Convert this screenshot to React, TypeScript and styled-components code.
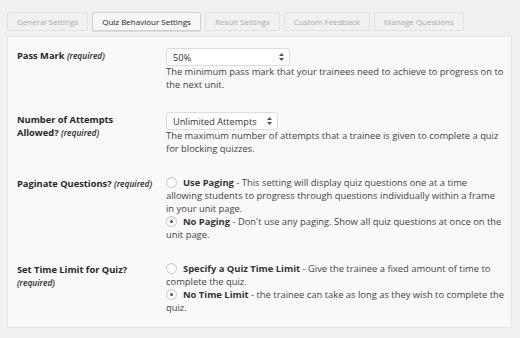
import React from 'react';
import styled, {createGlobalStyle} from 'styled-components';

const GlobalStyle = createGlobalStyle`
  html, body {
    margin: 0;
    padding: 0;
    background: #f1f1f1;
  }
  body {
    font-family: 'Open Sans', 'Noto Sans', sans-serif;
    color: #444;
  }
`;

const tabs = ['General Settings', 'Quiz Behaviour Settings', 'Result Settings', 'Custom Feedback', 'Manage Questions'];

interface SelectProps {
  value: string;
  width: number;
}

const SelectBox = ({value, width}: SelectProps) => (
  <Select style={{width}}>
    <span>{value}</span>
    <svg width="5" height="8" viewBox="0 0 5 8">
      <path d="M2.5 0 L5 3 L0 3 Z M0 5 L5 5 L2.5 8 Z" fill="#555" />
    </svg>
  </Select>
);

interface OptionProps {
  checked?: boolean;
  title: string;
  children: React.ReactNode;
}

const RadioOption = ({checked = false, title, children}: OptionProps) => (
  <OptionLine>
    <Radio $checked={checked} />
    <OptionTitle>{title}</OptionTitle> - {children}
  </OptionLine>
);

const App = () => {
  const activeTab = 'Quiz Behaviour Settings';

  return (
    <>
      <GlobalStyle />
      <Page>
        <TabBar>
          {tabs.map((tab) => (
            <Tab key={tab} $active={tab === activeTab}>
              {tab}
            </Tab>
          ))}
        </TabBar>

        <Panel>
          <Row>
            <Label>
              Pass Mark <Required>(required)</Required>
            </Label>
            <Field>
              <SelectBox value="50%" width={124} />
              <Description>
                The minimum pass mark that your trainees need to achieve to progress on to the next unit.
              </Description>
            </Field>
          </Row>

          <Row>
            <Label>
              Number of Attempts
              <br />
              Allowed? <Required>(required)</Required>
            </Label>
            <Field>
              <SelectBox value="Unlimited Attempts" width={112} />
              <Description>
                The maximum number of attempts that a trainee is given to complete a quiz for blocking quizzes.
              </Description>
            </Field>
          </Row>

          <Row>
            <Label>
              Paginate Questions? <Required>(required)</Required>
            </Label>
            <Field>
              <RadioOption title="Use Paging">
                This setting will display quiz questions one at a time allowing students to progress through
                questions individually within a frame in your unit page.
              </RadioOption>
              <RadioOption checked title="No Paging">
                Don't use any paging. Show all quiz questions at once on the unit page.
              </RadioOption>
            </Field>
          </Row>

          <Row>
            <Label>
              Set Time Limit for Quiz?
              <br />
              <Required>(required)</Required>
            </Label>
            <Field>
              <RadioOption title="Specify a Quiz Time Limit">
                Give the trainee a fixed amount of time to complete the quiz.
              </RadioOption>
              <RadioOption checked title="No Time Limit">
                the trainee can take as long as they wish to complete the quiz.
              </RadioOption>
            </Field>
          </Row>
        </Panel>
      </Page>
    </>
  );
};

const Page = styled.div`
  width: 520px;
  height: 338px;
  padding: 12px 8px 0 7px;
  box-sizing: border-box;
  background: #f1f1f1;
`;

const TabBar = styled.div`
  display: flex;
  gap: 4px;
  height: 19px;
  margin-bottom: 5px;
`;

const Tab = styled.div<{$active: boolean}>`
  display: flex;
  align-items: center;
  padding: 0 9px;
  box-sizing: border-box;
  height: 19px;
  font-size: 8px;
  border: 1px solid ${(p) => (p.$active ? '#cfcfcf' : '#e2e2e2')};
  border-radius: 2px;
  background: ${(p) => (p.$active ? '#f7f7f7' : '#f1f1f1')};
  color: ${(p) => (p.$active ? '#222' : '#a9a9a9')};
  box-shadow: ${(p) => (p.$active ? '0 1px 0 #ddd' : 'none')};
`;

const Panel = styled.div`
  width: 505px;
  height: 292px;
  box-sizing: border-box;
  background: #f9f9f9;
  border: 1px solid #e5e5e5;
  padding: 11px 6px 0 9px;
  display: flex;
  flex-direction: column;
  gap: 21px;
`;

const Row = styled.div`
  display: grid;
  grid-template-columns: 149px 1fr;
`;

const Label = styled.div`
  font-size: 9.3px;
  line-height: 13px;
  font-weight: 700;
  color: #23282d;
  padding-top: 1px;
`;

const Required = styled.em`
  font-size: 8.4px;
  font-style: italic;
  font-weight: 600;
`;

const Field = styled.div`
  font-size: 9.4px;
  line-height: 13px;
  color: #444;
`;

const Select = styled.div`
  display: flex;
  align-items: center;
  justify-content: space-between;
  box-sizing: border-box;
  height: 18px;
  padding: 0 5px 0 6px;
  background: #fff;
  border: 1px solid #dcdcdc;
  border-radius: 3px;
  font-size: 9.2px;
  color: #333;
`;

const Description = styled.p`
  margin: -1px 0 0;
`;

const OptionLine = styled.div`
  line-height: 13px;
`;

const Radio = styled.span<{$checked: boolean}>`
  display: inline-block;
  position: relative;
  width: 11px;
  height: 11px;
  box-sizing: border-box;
  border: 1px solid #c4c7ca;
  border-radius: 50%;
  background: #fff;
  vertical-align: -2px;
  margin: 0 6px 0 0;
  box-shadow: inset 0 1px 1px rgba(0, 0, 0, 0.06);

  &::after {
    content: '';
    display: ${(p) => (p.$checked ? 'block' : 'none')};
    position: absolute;
    left: 3px;
    top: 3px;
    width: 3px;
    height: 3px;
    border-radius: 50%;
    background: #555;
  }
`;

const OptionTitle = styled.strong`
  font-weight: 700;
  color: #333;
`;

export default App;
